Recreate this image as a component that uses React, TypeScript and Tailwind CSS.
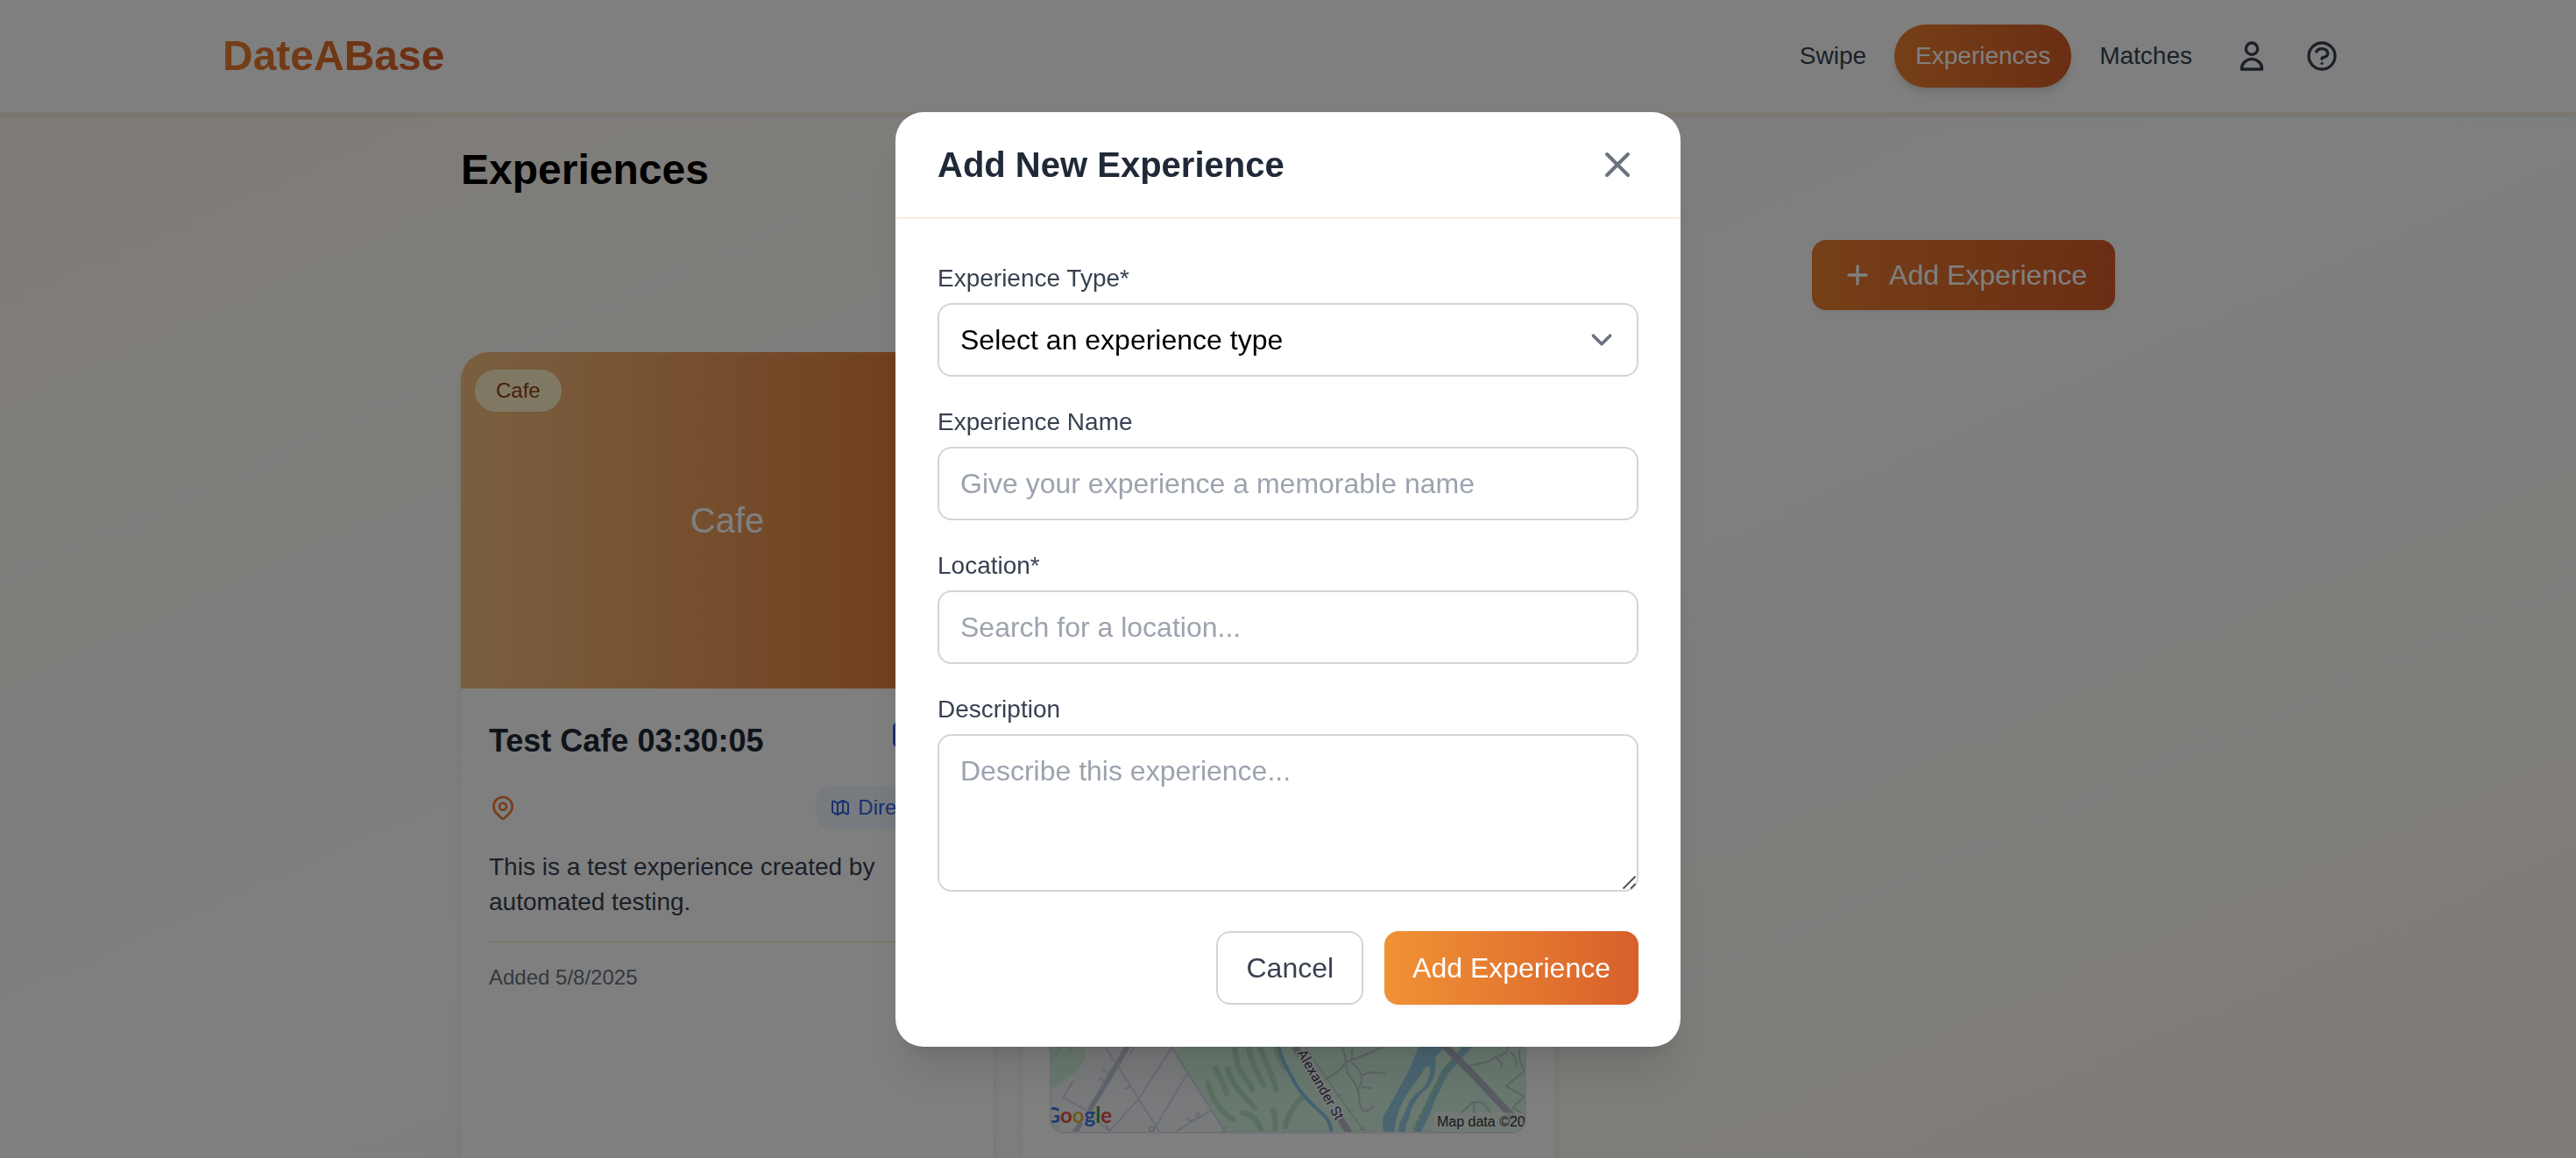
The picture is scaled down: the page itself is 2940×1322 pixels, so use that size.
import React from "react";

type IconProps = { d: string[]; className?: string };

function Icon({ d, className = "size-10" }: IconProps) {
  return (
    <svg
      viewBox="0 0 24 24"
      fill="none"
      stroke="currentColor"
      strokeWidth={2}
      strokeLinecap="round"
      strokeLinejoin="round"
      className={`${className} shrink-0`}
      aria-hidden="true"
    >
      {d.map((path) => (
        <path key={path} d={path} />
      ))}
    </svg>
  );
}

const icons = {
  user: ["M16 7a4 4 0 11-8 0 4 4 0 018 0z", "M12 14a7 7 0 00-7 7h14a7 7 0 00-7-7z"],
  help: [
    "M8.228 9c.549-1.165 2.03-2 3.772-2 2.21 0 4 1.343 4 3 0 1.4-1.278 2.575-3.006 2.907-.542.104-.994.54-.994 1.093m0 3h.01M21 12a9 9 0 11-18 0 9 9 0 0118 0z",
  ],
  plus: ["M12 6v12", "M6 12h12"],
  close: ["M6 18L18 6", "M6 6l12 12"],
  edit: [
    "M11 5H6a2 2 0 00-2 2v11a2 2 0 002 2h11a2 2 0 002-2v-5m-1.414-9.414a2 2 0 112.828 2.828L11.828 15H9v-2.828l8.586-8.586z",
  ],
  trash: [
    "M19 7l-.867 12.142A2 2 0 0116.138 21H7.862a2 2 0 01-1.995-1.858L5 7m5 4v6m4-6v6m1-10V4a1 1 0 00-1-1h-4a1 1 0 00-1 1v3M4 7h16",
  ],
  pin: [
    "M17.657 16.657L13.414 20.9a1.998 1.998 0 01-2.827 0l-4.244-4.243a8 8 0 1111.314 0z",
    "M15 11a3 3 0 11-6 0 3 3 0 016 0z",
  ],
  map: [
    "M9 20l-5.447-2.724A1 1 0 013 16.382V5.618a1 1 0 011.447-.894L9 7m0 13l6-3m-6 3V7m6 10l4.553 2.276A1 1 0 0021 18.382V7.618a1 1 0 00-.553-.894L15 4m0 13V4m0 0L9 7",
  ],
};

function Header() {
  return (
    <header className="border-b-2 border-[#fdeed8] bg-white shadow-[0_2px_6px_rgba(0,0,0,0.1)]">
      <div className="mx-auto flex h-32 max-w-[2560px] items-center justify-between px-16">
        <a
          href="#home"
          className="bg-linear-to-r from-[#ea7f2f] to-[#d65c28] bg-clip-text text-[48px] leading-[64px] font-bold text-transparent"
        >
          DateABase
        </a>
        <nav className="flex items-center gap-2 text-[28px] leading-10 text-[#374151]">
          <a href="#swipe" className="rounded-full px-6 py-4">Swipe</a>
          <a
            href="#experiences"
            className="rounded-full bg-linear-to-r from-[#ea7f2f] to-[#d65c28] px-6 py-4 text-white shadow-[0_8px_12px_-2px_rgba(0,0,0,0.1),0_4px_8px_-4px_rgba(0,0,0,0.1)]"
          >
            Experiences
          </a>
          <a href="#matches" className="rounded-full px-6 py-4">Matches</a>
          <button type="button" aria-label="Profile" className="rounded-full p-4">
            <Icon d={icons.user} />
          </button>
          <button type="button" aria-label="Help" className="rounded-full p-4">
            <Icon d={icons.help} />
          </button>
        </nav>
      </div>
    </header>
  );
}

const cardClass =
  "overflow-hidden rounded-[32px] bg-white shadow-[0_8px_12px_-2px_rgba(0,0,0,0.1),0_4px_8px_-4px_rgba(0,0,0,0.1)]";
const coverClass = "relative flex h-96 items-center justify-center bg-linear-to-r from-[#f4c080] to-[#de722c]";

function CafeCard() {
  return (
    <article className={cardClass}>
      <div className={coverClass}>
        <span className="text-[40px] leading-[56px] text-white">Cafe</span>
        <span className="absolute top-5 left-4 rounded-full bg-[#fef3c7] px-6 py-2 text-2xl text-[#92400e]">Cafe</span>
      </div>
      <div className="p-8">
        <div className="flex items-start justify-between">
          <h2 className="text-[36px] leading-[56px] font-bold text-[#1f2937]">Test Cafe 03:30:05</h2>
          <div className="flex gap-2">
            <button type="button" aria-label="Edit" className="text-[#3461e0]">
              <Icon d={icons.edit} />
            </button>
            <button type="button" aria-label="Delete" className="text-red-600">
              <Icon d={icons.trash} />
            </button>
          </div>
        </div>
        <div className="mt-6 flex items-center justify-between">
          <span className="text-[#ea7b2f]">
            <Icon d={icons.pin} className="size-8" />
          </span>
          <a
            href="#directions"
            className="flex items-center gap-2 rounded-2xl bg-blue-50 px-4 py-2 text-2xl text-[#3461e0]"
          >
            <Icon d={icons.map} className="size-6" />
            Directions
          </a>
        </div>
        <p className="mt-6 text-[28px] leading-10 text-[#374151]">
          This is a test experience created by automated testing.
        </p>
        <p className="mt-6 border-t-2 border-[#fdf0cf] pt-6 text-2xl text-[#6b7280]">Added 5/8/2025</p>
      </div>
    </article>
  );
}

function AreaMap() {
  return (
    <svg
      viewBox="0 0 540 472"
      preserveAspectRatio="xMinYMax slice"
      className="block h-[472px] w-full bg-[#f3f4f8]"
      role="img"
      aria-label="Map of the area around Alexander St"
      fill="none"
      strokeLinecap="round"
      strokeLinejoin="round"
    >
      <rect width="540" height="472" fill="#f3f4f8" />
      <g transform="translate(-4 370) scale(0.3333)">
        <path fill="#d3f3de" d="M0 -60H95L132 45L105 95L60 125L12 162H0zM10 270L40 290V320H0z" />
        <path fill="#d3f3de" d="M480 -40L436 55L478 105L612 320H1700V-40z" />
        <g stroke="#b5dfc2" strokeWidth="19">
          <path d="M640 0C640 60 655 95 670 115C685 135 695 150 700 160M685 0C690 60 715 100 738 145M722 0C735 60 775 110 782 165M780 0C785 50 800 70 815 90" />
          <path d="M575 88C585 120 605 145 612 175M615 90C630 150 680 190 708 225M548 140C560 190 590 240 636 265M665 240C700 245 720 270 730 300M770 230C780 260 782 280 776 310M870 190C835 225 820 250 812 290" />
        </g>
        <g stroke="#cfd4e2" strokeWidth="5">
          <path d="M196 15L382 305M425 15L310 195L210 305L135 235L52 188L85 135M190 260L210 305M425 15L478 105L365 295M478 105L610 310M438 305L560 232M420 10L610 310M610 290L590 310" />
          <path d="M40 15C42 30 30 45 12 52M75 15L82 28M188 93L212 110M178 122L198 138M265 160L285 148M292 15C292 25 288 35 280 35" />
          <path d="M475 258L488 272C490 262 500 262 500 272M505 250L515 240C522 248 518 258 508 258" />
        </g>
        <circle cx="355" cy="297" r="8" stroke="#c3c9da" strokeWidth="5" />
        <path d="M275 10L205 130L145 228M110 280L92 310" stroke="#c3c9da" strokeWidth="18" />
      </g>
      <g transform="translate(268 370) scale(0.3333)">
        <path d="M-25 15C-15 60 0 85 20 120C50 185 100 220 135 255C150 275 155 290 153 310" stroke="#86c4e4" strokeWidth="12" />
        <path
          fill="#93cbe3"
          d="M460 0H555L510 50C515 80 510 120 490 150C460 175 440 200 425 240C425 265 405 270 408 310H382C385 270 405 250 412 225C425 190 440 180 465 160C485 135 500 100 490 82C475 75 465 110 440 140C410 180 375 230 370 310H335C325 270 330 250 350 225C380 170 420 100 435 60z"
        />
        <path d="M625 10L580 60L545 100L500 190L480 240L448 310" stroke="#93cbe3" strokeWidth="24" strokeLinecap="butt" />
        <path d="M565 65L510 155L438 295" stroke="#a0cfb0" strokeWidth="8" strokeDasharray="14 12" />
        <path d="M225 0V55" stroke="#a5d8b6" strokeWidth="7" strokeDasharray="16 10" />
        <g stroke="#bfc5d0" strokeWidth="6">
          <path d="M330 15C290 35 240 55 200 70C190 95 165 110 135 125M190 15C195 35 208 50 203 72C205 95 210 110 225 125C240 145 245 160 248 175C250 210 255 235 270 235C285 235 292 228 296 218M225 70C250 90 262 110 258 130C255 145 250 155 246 165M260 112C285 100 315 100 338 108M258 153L290 157" />
          <path d="M625 80C660 72 695 70 715 50C735 45 755 40 760 15M715 50L740 72L735 82M770 35C785 45 785 60 790 80M800 15C795 50 800 75 815 90M820 95L752 150L815 185L775 225L815 245M600 240L640 205H670L700 240M643 205V240" />
          <path d="M65 15L170 170L268 305M108 98L124 90M170 185L188 178M212 238L228 230M250 302L266 292" strokeWidth="4" />
        </g>
        <path d="M30 15L48 45M185 262L215 310" stroke="#b4b7c6" strokeWidth="24" strokeLinecap="butt" />
        <path d="M535 5L640 110L780 260" stroke="#b4b7c6" strokeWidth="24" strokeLinecap="butt" />
      </g>
      <text
        transform="translate(280 382) rotate(60)"
        fill="#3f4055"
        stroke="#f7f7fa"
        strokeWidth="3"
        paintOrder="stroke"
        className="font-[Roboto] text-base"
      >
        Alexander St
      </text>
      <text x="69" y="462" textAnchor="end" className="font-[Lato] text-2xl font-bold">
        <tspan fill="#4377e8">G</tspan>
        <tspan fill="#e05242">o</tspan>
        <tspan fill="#eab03a">o</tspan>
        <tspan fill="#4377e8">g</tspan>
        <tspan fill="#3a9a55">l</tspan>
        <tspan fill="#e05242">e</tspan>
      </text>
      <rect x="437" y="450" width="103" height="22" fill="#f5f5f5" fillOpacity="0.6" />
      <text x="440" y="466" fill="#333333" className="text-base">Map data ©2025</text>
    </svg>
  );
}

function MapCard() {
  return (
    <article className={cardClass}>
      <div className={coverClass} />
      <div className="px-8 pt-8 pb-24">
        <div className="overflow-hidden rounded-2xl border-2 border-[#e0e3ea]">
          <AreaMap />
        </div>
      </div>
    </article>
  );
}

const labelClass = "block text-[28px] leading-10 text-[#374151]";
const fieldClass =
  "mt-2 block w-full rounded-2xl border-2 border-[#d1d5db] bg-white px-6 py-4 text-[32px] leading-[48px] placeholder:text-[#9ca3af]";

function AddExperienceDialog() {
  return (
    <div className="fixed inset-0 flex items-center justify-center bg-black/50 p-8">
      <div
        role="dialog"
        aria-modal="true"
        aria-labelledby="dialog-title"
        className="w-full max-w-4xl rounded-[32px] bg-white shadow-[0_40px_50px_-10px_rgba(0,0,0,0.1),0_16px_20px_-12px_rgba(0,0,0,0.1)]"
      >
        <div className="flex items-center justify-between border-b-2 border-[#fdecd6] px-12 py-8">
          <h2 id="dialog-title" className="text-[40px] leading-[56px] font-bold text-[#1f2937]">
            Add New Experience
          </h2>
          <button type="button" aria-label="Close" className="text-[#6b7280]">
            <Icon d={icons.close} className="size-12" />
          </button>
        </div>
        <form className="p-12" onSubmit={(event) => event.preventDefault()}>
          <div className="flex flex-col gap-8">
            <div>
              <label htmlFor="type" className={labelClass}>Experience Type*</label>
              <div className="relative">
                <select id="type" className={`${fieldClass} appearance-none text-black`} defaultValue="">
                  <option value="">Select an experience type</option>
                </select>
                <svg
                  viewBox="0 0 20 20"
                  fill="none"
                  stroke="#6b7280"
                  strokeWidth={1.5}
                  strokeLinecap="round"
                  strokeLinejoin="round"
                  className="pointer-events-none absolute inset-y-0 right-[18px] my-auto size-12"
                  aria-hidden="true"
                >
                  <path d="M6 8l4 4 4-4" />
                </svg>
              </div>
            </div>
            <div>
              <label htmlFor="name" className={labelClass}>Experience Name</label>
              <input id="name" type="text" placeholder="Give your experience a memorable name" className={fieldClass} />
            </div>
            <div>
              <label htmlFor="location" className={labelClass}>Location*</label>
              <input id="location" type="text" placeholder="Search for a location..." className={fieldClass} />
            </div>
            <div>
              <label htmlFor="description" className={labelClass}>Description</label>
              <div className="relative">
                <textarea
                  id="description"
                  rows={3}
                  placeholder="Describe this experience..."
                  className={`${fieldClass} resize-none`}
                />
                <svg
                  viewBox="0 0 20 20"
                  fill="none"
                  stroke="#555555"
                  strokeWidth={2}
                  className="pointer-events-none absolute right-0 bottom-0 size-5"
                  aria-hidden="true"
                >
                  <path d="M2.5 16.5L16.5 2.5M11 16.5L16.5 11" />
                </svg>
              </div>
            </div>
          </div>
          <div className="mt-[45px] flex justify-end gap-6 text-[32px] leading-[48px]">
            <button type="button" className="rounded-2xl border-2 border-[#d1d5db] px-8 py-4 text-[#374151]">
              Cancel
            </button>
            <button
              type="submit"
              className="rounded-2xl bg-linear-to-r from-[#f09235] to-[#d8602b] px-8 py-4 text-white shadow-[0_2px_4px_rgba(0,0,0,0.06)]"
            >
              Add Experience
            </button>
          </div>
        </form>
      </div>
    </div>
  );
}

export default function App() {
  return (
    <div className="h-screen overflow-hidden bg-linear-to-br from-orange-50 via-white to-orange-50 font-['Liberation_Sans',Arial,sans-serif]">
      <Header />
      <main className="mx-auto max-w-[1888px] pt-8">
        <h1 className="text-[48px] leading-[64px] font-bold text-black">Experiences</h1>
        <div className="mt-12 flex justify-end">
          <button
            type="button"
            className="flex items-center gap-4 rounded-2xl bg-linear-to-r from-[#ea7f2f] to-[#d65c28] px-8 py-4 text-[32px] leading-[48px] text-white shadow-[0_2px_4px_rgba(0,0,0,0.06)]"
          >
            <Icon d={icons.plus} />
            Add Experience
          </button>
        </div>
        <div className="mt-12 grid grid-cols-3 gap-8">
          <CafeCard />
          <MapCard />
        </div>
      </main>
      <AddExperienceDialog />
    </div>
  );
}
